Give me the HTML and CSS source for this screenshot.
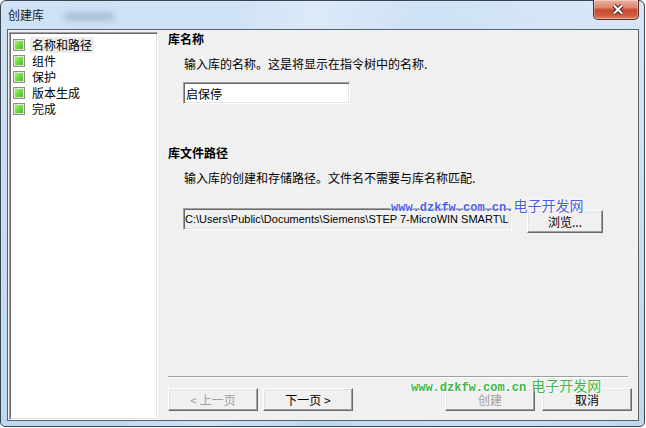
FILE: index.html
```html
<!DOCTYPE html>
<html lang="zh-CN">
<head>
<meta charset="utf-8">
<title>创建库</title>
<link rel="stylesheet" href="styles.css">
</head>
<body>
<div class="window">
  <div class="titlebar">
    <span class="title">创建库</span>
    <span class="ghost"></span>
    <div class="close">
      <svg width="12" height="11" viewBox="0 0 12 11"><path d="M2 1.5 L10 9.5 M10 1.5 L2 9.5" stroke="#3b2420" stroke-width="4.2" fill="none"/><path d="M2 1.5 L10 9.5 M10 1.5 L2 9.5" stroke="#fff" stroke-width="2.2" fill="none"/></svg>
    </div>
  </div>
  <div class="client">
    <div class="tree">
      <div class="item sel"><span class="chk"></span><span class="lbl">名称和路径</span></div>
      <div class="item"><span class="chk"></span><span class="lbl">组件</span></div>
      <div class="item"><span class="chk"></span><span class="lbl">保护</span></div>
      <div class="item"><span class="chk"></span><span class="lbl">版本生成</span></div>
      <div class="item"><span class="chk"></span><span class="lbl">完成</span></div>
    </div>
    <div class="main">
      <div class="h">库名称</div>
      <div class="desc">输入库的名称。这是将显示在指令树中的名称.</div>
      <input class="field name" type="text" value="启保停">
      <div class="h h2">库文件路径</div>
      <div class="desc">输入库的创建和存储路径。文件名不需要与库名称匹配.</div>
      <div class="pathrow">
        <input class="field path" type="text" readonly value="C:\Users\Public\Documents\Siemens\STEP 7-MicroWIN SMART\Lib">
        <button class="btn browse">浏览...</button>
      </div>
      <div class="spacer"></div>
      <div class="sep"></div>
      <div class="btnrow">
        <button class="btn dis">&lt; 上一页</button>
        <button class="btn next">下一页 &gt;</button>
        <button class="btn dis create">创建</button>
        <button class="btn cancel">取消</button>
      </div>
    </div>
  </div>
  <div class="wm wm-blue"><span class="url">www.dzkfw.com.cn.</span><span class="cn">电子开发网</span></div>
  <div class="wm wm-green"><span class="url">www.dzkfw.com.cn</span><span class="cn gap">电子开发网</span></div>
</div>
</body>
</html>
```
FILE: styles.css
```css
* { box-sizing: border-box; }

body {
  margin: 0;
  background: #ffffff;
  font-family: "Noto Sans CJK SC", "Liberation Sans", sans-serif;
  font-size: 12px;
  color: #000;
}

.window {
  position: relative;
  width: 645px;
  height: 427px;
  border: 1px solid #3c4650;
  border-radius: 6px 6px 5px 5px;
  background:
    linear-gradient(105deg, rgba(255,255,255,0) 0%, rgba(255,255,255,0) 30%, rgba(255,255,255,.28) 42%, rgba(255,255,255,0) 56%, rgba(255,255,255,.18) 80%, rgba(255,255,255,0) 100%),
    linear-gradient(#cfe2f6, #bfd8f2);
  padding: 0 5px 5px 6px;
  display: flex;
  flex-direction: column;
}

.titlebar {
  height: 28px;
  flex: none;
  display: flex;
  align-items: flex-start;
}

.title {
  margin: 7px 0 0 1px;
  line-height: 14px;
  font-size: 12px;
  color: #1a1a1a;
}

.ghost {
  width: 50px;
  height: 7px;
  margin: 12px 0 0 20px;
  background: rgba(90, 105, 125, .35);
  filter: blur(3px);
  border-radius: 4px;
}

.close {
  margin-left: auto;
  margin-top: -1px;
  width: 46px;
  height: 20px;
  border: 1px solid #5b2a22;
  border-top: none;
  border-radius: 0 0 5px 5px;
  background: linear-gradient(#eab0a2 0%, #dd8672 40%, #c64a30 52%, #cf5a3f 80%, #e0866a 100%);
  box-shadow: inset 0 0 0 1px rgba(255,255,255,.35);
  display: flex;
  align-items: center;
  justify-content: center;
  padding-left: 3px;
}

.close svg { display: block; }

.client {
  flex: 1;
  border: 1px solid #58636e;
  background: #f0f0f0;
  display: flex;
  min-height: 0;
}

.tree {
  width: 149px;
  flex: none;
  margin: 2px 0 0 1px;
  border: 1px solid;
  border-color: #a0a0a0 #ffffff #ffffff #a0a0a0;
  box-shadow: inset 1px 1px 0 #696969, inset -1px -1px 0 #e3e3e3;
  background: #fff;
  padding: 4px 0 0 3px;
}

.item {
  display: flex;
  align-items: center;
  height: 16px;
}

.chk {
  width: 12px;
  height: 12px;
  margin-right: 5px;
  border: 1px solid #8c8c8c;
  background: linear-gradient(135deg, #b8f48e 0%, #6fdc3c 50%, #3fb516 100%);
  box-shadow: inset 0 0 0 1px #dfe9d8;
}

.lbl {
  line-height: 16px;
  padding: 0 2px;
}

.sel .lbl { background: #ececec; }

.main {
  flex: 1;
  display: flex;
  flex-direction: column;
  padding: 2px 10px 9px 10px;
}

.h {
  font-weight: bold;
  line-height: 14px;
}

.h2 { margin-top: 42px; }

.desc {
  margin-top: 11px;
  line-height: 14px;
  padding-left: 16px;
}

.field {
  display: block;
  height: 22px;
  margin: 0;
  border: 1px solid;
  border-color: #a0a0a0 #ffffff #ffffff #a0a0a0;
  box-shadow: inset 1px 1px 0 #696969, inset -1px -1px 0 #e3e3e3;
  background: #fff;
  font-family: "Noto Sans CJK SC", "Liberation Sans", sans-serif;
  font-size: 12px;
  color: #000;
  padding: 0 2px 0 2px;
  outline: none;
}

.name {
  margin-top: 11px;
  margin-left: 15px;
  width: 167px;
}

.pathrow {
  margin-top: 23px;
  padding-left: 15px;
  display: flex;
  align-items: flex-start;
}

.path {
  width: 329px;
  background: #f0f0f0;
  font-family: "Liberation Sans", Arial, sans-serif;
  font-size: 11px;
  padding-left: 1px;
}

.btn {
  width: 90px;
  height: 23px;
  margin: 0;
  padding: 0;
  border: 1px solid;
  border-color: #ffffff #696969 #696969 #ffffff;
  box-shadow: inset -1px -1px 0 #a0a0a0, inset 1px 1px 0 #e3e3e3;
  background: #f0f0f0;
  font-family: "Noto Sans CJK SC", "Liberation Sans", sans-serif;
  font-size: 12px;
  line-height: 20px;
  color: #000;
}

.browse {
  width: 76px;
  margin-left: 15px;
  margin-top: 2px;
}

.dis { color: #a0a0a0; }

.spacer { flex: 1; }

.sep {
  height: 2px;
  border-top: 1px solid #a0a0a0;
  border-bottom: 1px solid #ffffff;
  margin-bottom: 10px;
}

.btnrow {
  display: flex;
  margin-right: -4px;
}

.next { margin-left: 5px; }
.create { margin-left: auto; }
.cancel { margin-left: 7px; }

.wm {
  position: absolute;
  white-space: nowrap;
  display: flex;
  align-items: baseline;
  text-shadow: 0 0 2px #fff, 0 0 2px #fff, 0 0 3px #fff;
}

.wm .url {
  font-family: "Liberation Mono", "Courier New", monospace;
  font-size: 12px;
  font-weight: bold;
}

.wm .cn {
  font-family: "Noto Sans CJK SC", sans-serif;
  font-size: 14px;
  line-height: 16px;
}

.wm .gap { margin-left: 5px; }

.wm-blue {
  left: 390px;
  top: 196px;
  color: #4b5de6;
}

.wm-green {
  left: 410px;
  top: 376px;
  color: #3db54a;
}
```
